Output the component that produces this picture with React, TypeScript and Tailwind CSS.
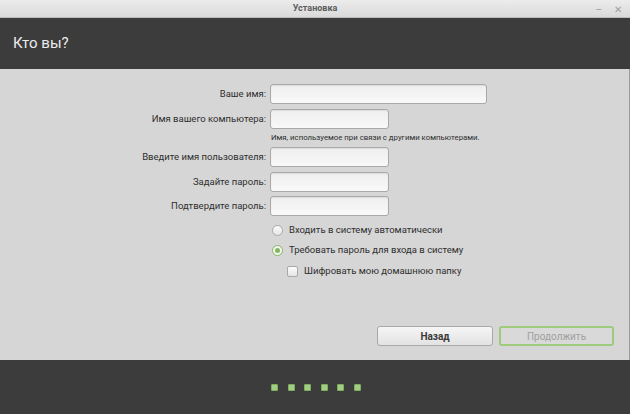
import React from "react"

function Field({ label, width }: { label: string; width: string }) {
  return (
    <div className="flex items-center h-[20px]">
      <div className="w-[270px] pr-[4px] text-right text-[9.5px] text-[#2e2e2e]">{label}</div>
      <div
        className={`${width} h-[20px] rounded-[3px] border border-[#a9a9a9] bg-gradient-to-b from-[#eeeeee] to-[#f9f9f9] shadow-[inset_0_1px_1px_rgba(0,0,0,0.08)]`}
      />
    </div>
  )
}

export default function App() {
  return (
    <div
      className="w-[630px] h-[414px] flex flex-col bg-[#d6d6d6] overflow-hidden"
      style={{ fontFamily: 'Roboto, "Noto Sans", sans-serif' }}
    >
      {/* title bar */}
      <div className="relative h-[18px] flex items-center justify-center bg-gradient-to-b from-[#ececec] to-[#dadada] border-b border-[#bdbdbd]">
        <span className="text-[9px] font-bold text-[#5c5c5c]">Установка</span>
        <div className="absolute right-[8px] top-0 h-[18px] flex items-center gap-[12px] text-[#a0a0a0] text-[10px]">
          <span>–</span>
          <span>✕</span>
        </div>
      </div>

      {/* header */}
      <div className="h-[51px] bg-[#3c3c3c] flex items-center px-[13px]">
        <span className="text-[15px] text-[#ececec]">Кто вы?</span>
      </div>

      {/* body */}
      <div className="flex-1 flex flex-col pt-[15px] border-r border-[#9a9a9a]">
        <Field label="Ваше имя:" width="w-[217px]" />
        <div className="h-[5px]" />
        <Field label="Имя вашего компьютера:" width="w-[119px]" />
        <div className="h-[18px] flex items-center pl-[271px] text-[7.8px] text-[#2e2e2e]">
          Имя, используемое при связи с другими компьютерами.
        </div>
        <Field label="Введите имя пользователя:" width="w-[119px]" />
        <div className="h-[5px]" />
        <Field label="Задайте пароль:" width="w-[119px]" />
        <div className="h-[4px]" />
        <Field label="Подтвердите пароль:" width="w-[119px]" />

        <div className="flex flex-col pl-[272px] pt-[4px] text-[9.5px] text-[#2e2e2e]">
          <div className="flex items-center h-[20px] gap-[6px]">
            <span className="w-[11px] h-[11px] rounded-full border border-[#a9a9a9] bg-gradient-to-b from-[#fbfbfb] to-[#e6e6e6]" />
            <span>Входить в систему автоматически</span>
          </div>
          <div className="flex items-center h-[21px] gap-[6px]">
            <span className="w-[11px] h-[11px] rounded-full border border-[#86b55f] bg-[#f4f4f4] flex items-center justify-center">
              <span className="w-[5px] h-[5px] rounded-full bg-[#86b55f]" />
            </span>
            <span>Требовать пароль для входа в систему</span>
          </div>
          <div className="flex items-center h-[20px] gap-[6px] pl-[15px]">
            <span className="w-[11px] h-[11px] rounded-[2px] border border-[#a9a9a9] bg-gradient-to-b from-[#fbfbfb] to-[#e6e6e6]" />
            <span>Шифровать мою домашнюю папку</span>
          </div>
        </div>

        <div className="mt-auto mb-[14px] flex justify-end gap-[6px] pr-[15px]">
          <button className="w-[116px] h-[20px] rounded-[3px] border border-[#a9a9a9] bg-gradient-to-b from-[#f6f6f6] to-[#e2e2e2] text-[10px] font-bold text-[#3a3a3a]">
            Назад
          </button>
          <button className="w-[115px] h-[20px] rounded-[3px] border-2 border-[#9fcb7c] bg-[#d9d9d9] text-[10px] text-[#a0a0a0]">
            Продолжить
          </button>
        </div>
      </div>

      {/* footer */}
      <div className="h-[54px] bg-[#3c3c3c] flex items-center justify-center pl-[2px]">
        <div className="flex gap-[9.5px]">
          {[0, 1, 2, 3, 4, 5].map((i) => (
            <span
              key={i}
              className="w-[7px] h-[7px] rounded-[1px] bg-[#a3cc85] border border-[#7fae5c]"
            />
          ))}
        </div>
      </div>
    </div>
  )
}
